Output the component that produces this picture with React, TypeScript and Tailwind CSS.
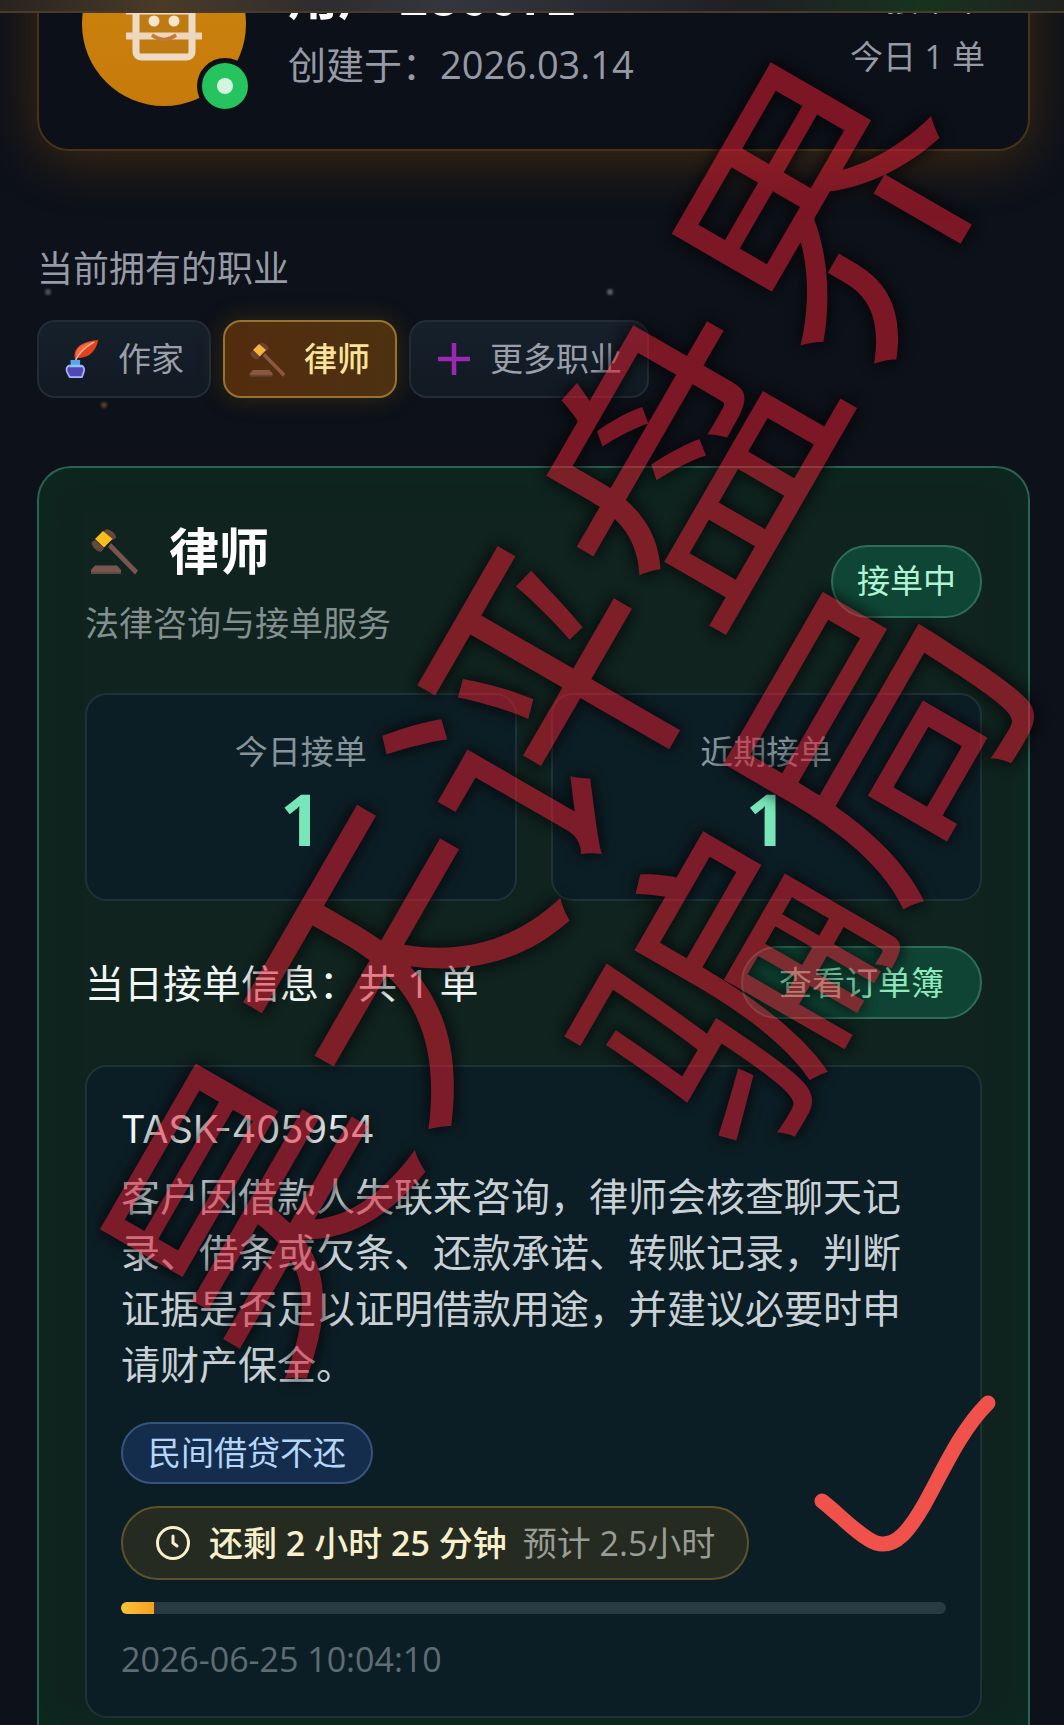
import type { ReactNode } from "react";

function QuillIcon() {
  return (
    <svg viewBox="0 0 36 42" className="h-10 w-9 shrink-0" aria-hidden="true">
      <path d="M11 22C7 10 18 2 35 1C33 12 26 20 13 20Z" fill="#e2401f" />
      <path d="M12 18C10 10 19 4 31 3C24 7 17 12 12 20Z" fill="#f56a3f" />
      <path d="M10 25C13 17 20 9 31 3" stroke="#f7b9a2" strokeWidth="1.4" fill="none" />
      <path d="M6 22h10v6H6z" fill="#5ba4ec" />
      <path d="M4 28h14q3 2 2 6l-2 6H5l-3-6q-1-4 2-6z" fill="#5146b8" stroke="#a9b6fb" strokeWidth="1.8" strokeLinejoin="round" />
      <path d="M5 28.500h13" stroke="#83c6f7" strokeWidth="2.400" />
    </svg>
  );
}

function GavelIcon({ className, dim = false }: { className: string; dim?: boolean }) {
  const wood = dim ? "#8a5743" : "#76564e";
  const dark = dim ? "#6b4335" : "#634840";
  return (
    <svg viewBox="0 0 48 48" className={className} aria-hidden="true">
      <path d="M20 16L47 43.500L44 47.500L17 20Z" fill={wood} />
      <path d="M14 3C17 0 26 7 25 11L22 13L12 6Z" fill={dark} />
      <path d="M1 15C-1 19 8 27 11 24L13 21L4 13Z" fill={dark} />
      <path d="M12 4L21.500 12L13 20.500L4 12Z" fill={dim ? "#f3b63c" : "#fbbd1c"} />
      <path d="M4 38.500h22l4 4.500v4H0v-4z" fill={wood} />
      <path d="M0 45h30v2H0z" fill={dark} />
    </svg>
  );
}

function PlusIcon() {
  return (
    <svg viewBox="0 0 36 36" className="size-9 shrink-0" aria-hidden="true">
      <path d="M18 2v32M2 18h32" stroke="#9c27b0" strokeWidth="4.500" />
    </svg>
  );
}

function RobotFace() {
  return (
    <svg viewBox="0 0 76 76" className="size-19" aria-hidden="true">
      <g fill="none" stroke="#ecdcc6" strokeWidth="7">
        <path d="M0 25h12" />
        <rect x="10" y="6" width="56" height="65" rx="5" fill="#c07a12" />
        <path d="M10 25h56" />
      </g>
      <path d="M0 50h76" stroke="#ecd6bd" strokeWidth="7" />
      <circle cx="28" cy="35" r="5.500" fill="#f7e6cd" />
      <circle cx="48" cy="35" r="5.500" fill="#f7e6cd" />
      <path d="M26 49q12 9 24 0" stroke="#c07a3a" strokeWidth="3.500" fill="none" />
    </svg>
  );
}

function JobTab({ icon, label, active = false }: { icon: ReactNode; label: string; active?: boolean }) {
  return (
    <button
      type="button"
      aria-pressed={active}
      className={
        "flex h-[78px] items-center gap-[18px] rounded-[18px] border-2 px-[25px] text-[33px] leading-[50px] " +
        (active
          ? "border-[#987330] bg-linear-to-r from-[#542c0e] to-[#4c3110] font-medium text-[#fbe39a] shadow-[0_0_24px_rgba(180,110,10,0.25)]"
          : "border-[#232b35] bg-linear-to-b from-[#16202b] to-[#111a23] text-[#9a9fa9]")
      }
    >
      {icon}
      {label}
    </button>
  );
}

function Stat({ label, value }: { label: string; value: number }) {
  return (
    <div className="rounded-[22px] border-2 border-[#1f3336] bg-[#0c1e25] pt-8 pb-10 text-center">
      <div className="text-[33px] leading-[50px] text-[#87949a]">{label}</div>
      <div className="text-[72px] leading-[82px] font-bold text-[#78e6b8]">{value}</div>
    </div>
  );
}

export default function App() {
  const progress = 4;
  return (
    <div
      lang="zh-CN"
      className="relative flex min-h-screen flex-col overflow-hidden bg-[#0d1119] font-['Open_Sans','Noto_Sans_CJK_SC',sans-serif]"
    >
      <header className="h-[13px] border-b-2 border-[#4a3a2a] bg-[linear-gradient(90deg,#28231f_0%,#4a3b28_15%,#2e2c2e_30%,#34363f_42%,#1f1f24_70%,#17331f_87%,#20201f_100%)]" />

      <section className="flex h-[229px] items-end overflow-hidden pr-[34px] pb-[91px] pl-[37px]">
        <div className="flex w-full items-center gap-[42px] rounded-[32px] border-2 border-[#4a3218] bg-[#0c1018] p-[43px] shadow-[0_8px_56px_rgba(170,95,10,0.32)]">
          <div className="relative flex size-[164px] shrink-0 items-center justify-center rounded-full bg-linear-to-b from-[#cf850f] to-[#c57a0b]">
            <RobotFace />
            <span className="absolute -right-[7px] -bottom-2 flex size-14 items-center justify-center rounded-full border-[5px] border-[#0c1018] bg-[#25c45f]">
              <span className="size-4 rounded-full bg-[#d3f5df]" />
            </span>
          </div>
          <div className="flex flex-1 flex-col gap-2">
            <h1 className="font-['Noto_Sans_CJK_SC',sans-serif] text-[50px] leading-[72px] font-bold text-white">用户 286672</h1>
            <p className="text-[38px] leading-[54px] text-[#959aa5]">创建于：2026.03.14</p>
          </div>
          <div className="flex flex-col gap-2 pt-2 text-right text-[33px] leading-[50px]">
            <span className="text-[#8fc7a8]">接单中</span>
            <span className="text-[#959aa5]">今日 1 单</span>
          </div>
        </div>
      </section>

      <section className="px-[37px]">
        <h2 className="text-[36px] leading-[54px] text-[#969ba6]">当前拥有的职业</h2>
        <div className="mt-6 flex gap-3">
          <JobTab icon={<QuillIcon />} label="作家" />
          <JobTab icon={<GavelIcon className="size-9 shrink-0" dim />} label="律师" active />
          <JobTab icon={<PlusIcon />} label="更多职业" />
        </div>
      </section>

      <span className="absolute top-[289px] left-[45px] size-[6px] rounded-full bg-[#4c515a] blur-[1px]" />
      <span className="absolute top-[289px] left-[607px] size-[6px] rounded-full bg-[#5a5f68] blur-[1px]" />
      <span className="absolute top-[402px] left-[101px] size-[6px] rounded-full bg-[#5a3e2b] blur-[1px]" />

      <main className="mt-[68px] mr-[34px] ml-[37px] flex-1 rounded-t-[34px] border-2 border-b-0 border-[#2e6151] bg-[#10231f] px-[46px] pt-[46px] shadow-[inset_0_0_36px_rgba(4,52,34,0.5)]">
        <div className="flex items-center justify-between">
          <div>
            <div className="flex items-center gap-[30px] pt-[2px] pl-[6px]">
              <GavelIcon className="size-12 shrink-0" />
              <h2 className="text-[50px] leading-[70px] font-bold text-white">律师</h2>
            </div>
            <p className="mt-3 text-[34px] leading-[50px] text-[#83908f]">法律咨询与接单服务</p>
          </div>
          <span className="flex h-[73px] items-center rounded-full border-2 border-[#2e6e57] bg-[#0f4534] px-6 text-[33px] leading-[50px] text-[#b0f4d4]">
            接单中
          </span>
        </div>

        <div className="mt-[45px] grid grid-cols-2 gap-[34px]">
          <Stat label="今日接单" value={1} />
          <Stat label="近期接单" value={1} />
        </div>

        <div className="mt-[45px] flex items-center justify-between">
          <h3 className="text-[39px] leading-[56px] text-[#f2f6f5]">当日接单信息：共 1 单</h3>
          <button
            type="button"
            className="flex h-[73px] items-center rounded-full border-2 border-[#2e6e57] bg-[#0f4434] px-9 text-[33px] leading-[50px] text-[#8ee9bd]"
          >
            查看订单簿
          </button>
        </div>

        <article className="relative mt-[46px] flex flex-col items-start rounded-[22px] border-2 border-[#1f3336] bg-[#0c1e25] px-[34px] pt-[34px] pb-8">
          <h4 className="font-[Inter,sans-serif] text-[38px] leading-[56px] text-[#f2f6f7]">TASK-405954</h4>
          <p className="mt-[11px] pr-8 text-[39px] leading-[56px] text-[#c9d1d6]">
            客户因借款人失联来咨询，律师会核查聊天记录、借条或欠条、还款承诺、转账记录，判断证据是否足以证明借款用途，并建议必要时申请财产保全。
          </p>
          <span className="mt-[30px] flex h-[62px] items-center rounded-full border-2 border-[#36557c] bg-[#152d4d] px-[25px] text-[33px] leading-[50px] text-[#b5d6fb]">
            民间借贷不还
          </span>
          <div className="mt-[22px] flex h-[74px] items-center rounded-full border-2 border-[#5d532a] bg-[#252b20] px-8 text-[34px] leading-[50px]">
            <svg viewBox="0 0 36 36" className="size-9" fill="none" stroke="#f8f0cd" strokeWidth="3" strokeLinecap="round" aria-hidden="true">
              <circle cx="18" cy="18" r="15.500" />
              <path d="M18 11v7l4 3" />
            </svg>
            <span className="ml-[18px] font-medium text-[#f8f0cd]">
              还剩 <b className="font-semibold">2</b> 小时 <b className="font-semibold">25</b> 分钟
            </span>
            <span className="ml-4 text-[#9a9d96]">预计 2.5小时</span>
          </div>
          <div
            role="progressbar"
            aria-label="接单进度"
            aria-valuenow={progress}
            aria-valuemin={0}
            aria-valuemax={100}
            className="mt-[22px] h-3 w-full overflow-hidden rounded-full bg-[#293a43]"
          >
            <div className="h-full bg-linear-to-r from-[#fbc23c] to-[#f5a01c]" style={{ width: `${progress}%` }} />
          </div>
          <time dateTime="2026-06-25T10:04:10" className="mt-5 text-[34px] leading-[50px] text-[#5f6c74]">
            2026-06-25 10:04:10
          </time>
          <svg
            viewBox="0 0 182 158"
            className="absolute -right-4 bottom-[163px] h-[158px] w-[182px]"
            fill="none"
            stroke="#f0524b"
            strokeWidth="15"
            strokeLinecap="round"
            strokeLinejoin="round"
            aria-hidden="true"
          >
            <path d="M8 106C26 120 46 142 62 148C82 154 96 134 110 110C130 74 146 36 174 8" />
          </svg>
        </article>
      </main>

      <div className="pointer-events-none absolute top-[777px] left-[658px] -translate-x-1/2 -translate-y-1/2 rotate-[-60deg] text-center font-['Noto_Sans_CJK_SC',sans-serif] text-[288px] leading-[304px] whitespace-nowrap text-[#d81c31] opacity-55 [text-shadow:0_0_16px_#000,0_0_16px_#000]">
        昊天评盘界
        <br />
        骗局
      </div>
    </div>
  );
}
